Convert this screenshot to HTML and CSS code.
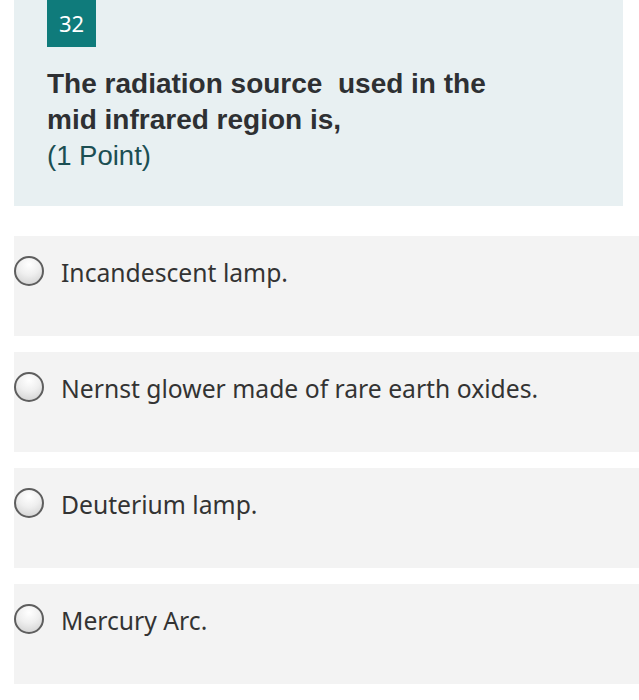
FILE: index.html
```html
<!DOCTYPE html>
<html>
<head>
<meta charset="utf-8">
<link rel="stylesheet" href="styles.css">
</head>
<body>
<div class="page">
  <div class="question">
    <div class="badge">32</div>
    <div class="qtext">The radiation source&nbsp; used in the<br>mid infrared region is,</div>
    <div class="points">(1 Point)</div>
  </div>
  <div class="options">
    <div class="option"><span class="radio"></span><span class="label">Incandescent lamp.</span></div>
    <div class="option"><span class="radio"></span><span class="label">Nernst glower made of rare earth oxides.</span></div>
    <div class="option"><span class="radio"></span><span class="label">Deuterium lamp.</span></div>
    <div class="option"><span class="radio"></span><span class="label">Mercury Arc.</span></div>
  </div>
</div>
</body>
</html>
```
FILE: styles.css
```css
html, body {
  margin: 0;
  padding: 0;
  background: #ffffff;
}
.page {
  padding-left: 14px;
  width: 625px;
}
.question {
  width: 609px;
  height: 206px;
  box-sizing: border-box;
  background: #e8f0f2;
  padding-left: 33px;
}
.badge {
  width: 49px;
  height: 47px;
  background: #0f7b7b;
  color: #ffffff;
  font-family: "Noto Sans", sans-serif;
  font-size: 22px;
  line-height: 47px;
  text-align: center;
  box-sizing: border-box;
}
.qtext {
  margin-top: 19px;
  font-family: "Liberation Sans", Arial, sans-serif;
  font-weight: bold;
  font-size: 28px;
  line-height: 36px;
  color: #2e3033;
}
.points {
  font-family: "Liberation Sans", Arial, sans-serif;
  font-size: 27.5px;
  line-height: 36px;
  color: #1b4f53;
}
.options {
  margin-top: 30px;
  display: flex;
  flex-direction: column;
  gap: 16px;
}
.option {
  height: 100px;
  background: #f3f3f3;
  display: flex;
  align-items: flex-start;
  padding-top: 20px;
  box-sizing: border-box;
}
.radio {
  width: 30px;
  height: 30px;
  box-sizing: border-box;
  border-radius: 50%;
  border: 2px solid #5e5e5e;
  background: radial-gradient(circle at 50% 25%, #ffffff 0%, #efefef 45%, #cdcdcd 100%);
  flex: none;
}
.label {
  margin-left: 17px;
  margin-top: 2px;
  font-family: "Noto Sans", sans-serif;
  font-size: 24.7px;
  line-height: 30px;
  color: #333333;
}
```
